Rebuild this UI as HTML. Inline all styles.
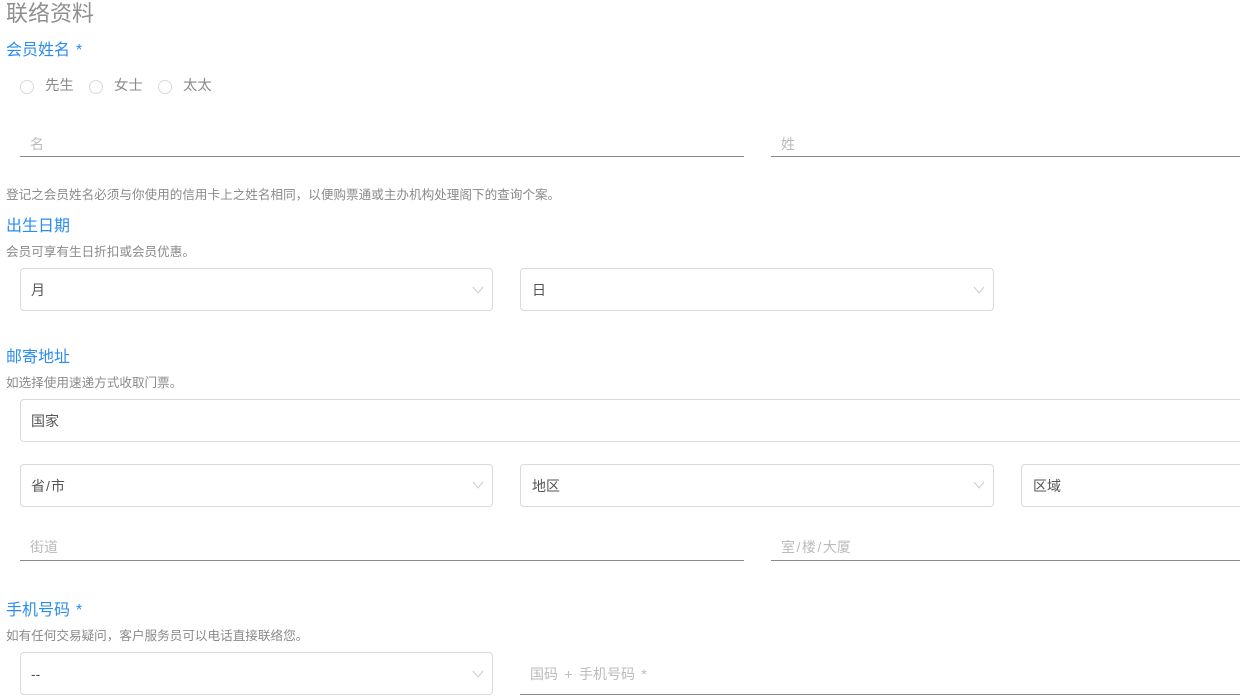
<!DOCTYPE html>
<html><head><meta charset="utf-8"><style>
html,body{margin:0;padding:0;background:#fff;width:1240px;height:700px;overflow:hidden;font-family:"Liberation Sans","Noto Sans CJK SC",sans-serif}
.a{position:absolute;white-space:nowrap;line-height:20px}
.h{font-size:22px;color:#8f8f8f;left:6px;top:2px;line-height:24px}
.l{font-size:16px;color:#2a8cf0;left:6px;word-spacing:1.5px}
.s{font-size:12.6px;color:#8a8a8a;left:6px}
.r{font-size:14.4px;color:#8a8a8a}
.p{font-size:14px;color:#bbb;word-spacing:2.5px}
.v{font-size:14px;color:#555}
.w{margin:0 1px}
.x{margin:0 1.5px}
.c{position:absolute;box-sizing:border-box;width:14px;height:14px;border:1px solid #d9d9d9;border-radius:50%;top:80px}
.b{position:absolute;box-sizing:border-box;height:43px;border:1px solid #d9d9d9;border-radius:4px;background:#fff}
.u{position:absolute;height:1px;background:#8a8a8a}
svg{position:absolute}
</style></head><body>
<div class="a h">联络资料</div>
<div class="a l" style="top:41px">会员姓名 *</div>
<div class="c" style="left:20px"></div><div class="a r" style="left:45px;top:76px">先生</div>
<div class="c" style="left:89px"></div><div class="a r" style="left:114px;top:76px">女士</div>
<div class="c" style="left:158px"></div><div class="a r" style="left:183px;top:76px">太太</div>
<div class="a p" style="left:30px;top:134px">名</div><div class="u" style="left:20px;top:156px;width:724px"></div>
<div class="a p" style="left:781px;top:134px">姓</div><div class="u" style="left:771px;top:156px;width:469px"></div>
<div class="a s" style="top:185px">登记之会员姓名必须与你使用的信用卡上之姓名相同，以便购票通或主办机构处理阁下的查询个案。</div>
<div class="a l" style="top:217px">出生日期</div>
<div class="a s" style="top:242px">会员可享有生日折扣或会员优惠。</div>
<div class="b" style="left:20px;top:268px;width:473px"></div><div class="a v" style="left:31px;top:280px">月</div>
<svg style="left:472px;top:286px" width="12" height="8"><path d="M1 1L6 7L11 1" fill="none" stroke="#ccc"/></svg>
<div class="b" style="left:520px;top:268px;width:474px"></div><div class="a v" style="left:532px;top:280px">日</div>
<svg style="left:973px;top:286px" width="12" height="8"><path d="M1 1L6 7L11 1" fill="none" stroke="#ccc"/></svg>
<div class="a l" style="top:348px">邮寄地址</div>
<div class="a s" style="top:373px">如选择使用速递方式收取门票。</div>
<div class="b" style="left:20px;top:399px;width:1240px"></div><div class="a v" style="left:31px;top:411px">国家</div>
<div class="b" style="left:20px;top:464px;width:473px"></div><div class="a v" style="left:31px;top:476px">省<span class="w">/</span>市</div>
<svg style="left:472px;top:481px" width="12" height="8"><path d="M1 1L6 7L11 1" fill="none" stroke="#ccc"/></svg>
<div class="b" style="left:520px;top:464px;width:474px"></div><div class="a v" style="left:532px;top:476px">地区</div>
<svg style="left:973px;top:481px" width="12" height="8"><path d="M1 1L6 7L11 1" fill="none" stroke="#ccc"/></svg>
<div class="b" style="left:1021px;top:464px;width:300px"></div><div class="a v" style="left:1033px;top:476px">区域</div>
<div class="a p" style="left:30px;top:537px">街道</div><div class="u" style="left:20px;top:560px;width:724px"></div>
<div class="a p" style="left:781px;top:537px">室<span class="x">/</span>楼<span class="x">/</span>大厦</div><div class="u" style="left:771px;top:560px;width:469px"></div>
<div class="a l" style="top:601px">手机号码 *</div>
<div class="a s" style="top:626px">如有任何交易疑问，客户服务员可以电话直接联络您。</div>
<div class="b" style="left:20px;top:652px;width:473px"></div><div class="a v" style="left:31px;top:664px">--</div>
<svg style="left:472px;top:670px" width="12" height="8"><path d="M1 1L6 7L11 1" fill="none" stroke="#ccc"/></svg>
<div class="a p" style="left:530px;top:664px">国码 + 手机号码 *</div><div class="u" style="left:520px;top:694px;width:720px"></div>
</body></html>
